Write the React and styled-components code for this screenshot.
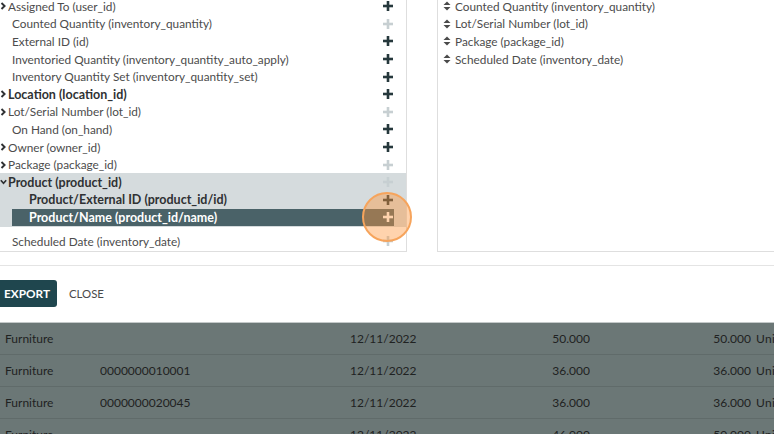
import styled, { createGlobalStyle } from "styled-components";

const GlobalStyle = createGlobalStyle`
  html, body {
    margin: 0;
    padding: 0;
    background: #ffffff;
  }
  body {
    font-family: "Lato", "Open Sans", sans-serif;
    font-size: 11.8px;
    color: #4a4a4a;
  }
`;

const Page = styled.div`
  position: relative;
  width: 774px;
  height: 434px;
  overflow: hidden;
`;

const Panels = styled.div`
  display: flex;
  gap: 30px;
  margin-top: -2.5px;
`;

const FieldPanel = styled.div`
  width: 406px;
  border-right: 1px solid #dedede;
  border-bottom: 1px solid #dedede;
  padding-bottom: 1px;
`;

const ExportPanel = styled.div`
  flex: 1;
  border-left: 1px solid #dedede;
  border-bottom: 1px solid #dedede;
  padding-left: 5px;
`;

const Row = styled.div`
  height: 17.6px;
  display: flex;
  align-items: center;
  margin-left: ${({ $indent }) => ($indent ? "12px" : "0")};
  margin-right: 12px;
  padding-left: ${({ $pad }) => $pad || 0}px;
  padding-right: 1px;
  font-size: ${({ $bold }) => ($bold ? "12.5px" : "11.8px")};
  font-weight: ${({ $bold }) => ($bold ? 700 : 400)};
  color: ${({ $active, $bold }) =>
    $active ? "#ffffff" : $bold ? "#2f3133" : "#4c4c4c"};
  background: ${({ $active }) => ($active ? "#4a6268" : "transparent")};
  white-space: nowrap;
`;

const Label = styled.span`
  flex: 1;
  overflow: hidden;
`;

const ChevronBox = styled.span`
  width: 8px;
  display: inline-flex;
  align-items: center;
  flex-shrink: 0;
`;

const ProductGroup = styled.div`
  background: #d5dbdd;
  padding-bottom: 1px;
  margin-bottom: 5px;
`;

const SortRow = styled.div`
  height: 17.6px;
  display: flex;
  align-items: center;
  gap: 4px;
  color: #4c4c4c;
  white-space: nowrap;
`;

const Divider = styled.div`
  margin-top: 13px;
  border-top: 1px solid #e4e4e4;
`;

const Footer = styled.div`
  display: flex;
  align-items: center;
  gap: 12px;
  padding: 14px 0 15px;
`;

const Button = styled.button`
  height: 27px;
  padding: ${({ $primary }) => ($primary ? "0 7px 0 4px" : "0")};
  border: none;
  border-radius: ${({ $primary }) => ($primary ? "0 3px 3px 0" : "3px")};
  background: ${({ $primary }) => ($primary ? "#1f464e" : "transparent")};
  color: ${({ $primary }) => ($primary ? "#ffffff" : "#4a4a4a")};
  font-family: inherit;
  font-size: ${({ $primary }) => ($primary ? "11.8px" : "11.4px")};
  font-weight: ${({ $primary }) => ($primary ? 700 : 400)};
  text-transform: uppercase;
  cursor: pointer;
`;

const Table = styled.div`
  background: #6b7776;
  border-top: 1px solid #c4c9c9;
  font-size: 12px;
`;

const TableRow = styled.div`
  height: 31px;
  display: grid;
  grid-template-columns: 100px 250px 160px 80px 161px 30px;
  align-items: center;
  border-bottom: 1px solid #606b6a;
  color: #1f2222;
  white-space: nowrap;
`;

const Cell = styled.div`
  text-align: ${({ $right }) => ($right ? "right" : "left")};
  padding-left: ${({ $first }) => ($first ? "5px" : "0")};
  overflow: hidden;
`;

const UomCell = styled.div`
  padding-left: 5px;
  letter-spacing: 0.3px;
`;

const Spot = styled.div`
  position: absolute;
  left: 362px;
  top: 192px;
  width: 46px;
  height: 46px;
  border-radius: 50%;
  border: 2px solid #f6a45c;
  background: rgba(255, 150, 60, 0.42);
  pointer-events: none;
`;

function PlusIcon({ tone }) {
  const color =
    tone === "light" ? "#c7cfd2" : tone === "white" ? "#ffffff" : "#26383c";
  return (
    <svg width="10" height="10" viewBox="0 0 10 10">
      <rect x="3.7" y="0" width="2.6" height="10" fill={color} />
      <rect x="0" y="3.7" width="10" height="2.6" fill={color} />
    </svg>
  );
}

function Chevron({ open }) {
  return (
    <ChevronBox>
      <svg width="7" height="8" viewBox="0 0 7 8">
        {open ? (
          <polyline
            points="0.8,2.2 3.5,5.2 6.2,2.2"
            fill="none"
            stroke="#2f3133"
            strokeWidth="1.7"
          />
        ) : (
          <polyline
            points="1.5,1 4.6,4 1.5,7"
            fill="none"
            stroke="#2f3133"
            strokeWidth="1.9"
          />
        )}
      </svg>
    </ChevronBox>
  );
}

function SortIcon() {
  return (
    <svg width="8" height="10" viewBox="0 0 8 10">
      <polygon points="4,0.5 7.5,4 0.5,4" fill="#4a4a4a" />
      <polygon points="0.5,6 7.5,6 4,9.5" fill="#4a4a4a" />
    </svg>
  );
}

const fields = [
  { label: "Assigned To (user_id)", chevron: true, plus: "dark" },
  { label: "Counted Quantity (inventory_quantity)", plus: "light" },
  { label: "External ID (id)", plus: "dark" },
  { label: "Inventoried Quantity (inventory_quantity_auto_apply)", plus: "dark" },
  { label: "Inventory Quantity Set (inventory_quantity_set)", plus: "dark" },
  { label: "Location (location_id)", chevron: true, bold: true, plus: "dark" },
  { label: "Lot/Serial Number (lot_id)", chevron: true, plus: "light" },
  { label: "On Hand (on_hand)", plus: "dark" },
  { label: "Owner (owner_id)", chevron: true, plus: "dark" },
  { label: "Package (package_id)", chevron: true, plus: "light" },
];

const exported = [
  "Counted Quantity (inventory_quantity)",
  "Lot/Serial Number (lot_id)",
  "Package (package_id)",
  "Scheduled Date (inventory_date)",
];

const quants = [
  { category: "Furniture", lot: "", date: "12/11/2022", counted: "50.000", onHand: "50.000" },
  { category: "Furniture", lot: "0000000010001", date: "12/11/2022", counted: "36.000", onHand: "36.000" },
  { category: "Furniture", lot: "0000000020045", date: "12/11/2022", counted: "36.000", onHand: "36.000" },
  { category: "Furniture", lot: "", date: "12/11/2022", counted: "46.000", onHand: "50.000" },
];

function FieldRow({ field }) {
  return (
    <Row $bold={field.bold} $pad={field.chevron ? 0 : 12}>
      {field.chevron && <Chevron />}
      <Label>{field.label}</Label>
      <PlusIcon tone={field.plus} />
    </Row>
  );
}

export default function App() {
  return (
    <>
      <GlobalStyle />
      <Page>
        <Panels>
          <FieldPanel>
            {fields.map((field) => (
              <FieldRow key={field.label} field={field} />
            ))}
            <ProductGroup>
              <Row $bold>
                <Chevron open />
                <Label>Product (product_id)</Label>
                <PlusIcon tone="light" />
              </Row>
              <Row $bold $indent $pad={17}>
                <Label>Product/External ID (product_id/id)</Label>
                <PlusIcon tone="dark" />
              </Row>
              <Row $bold $indent $active $pad={17}>
                <Label>Product/Name (product_id/name)</Label>
                <PlusIcon tone="white" />
              </Row>
            </ProductGroup>
            <Row $pad={12}>
              <Label>Scheduled Date (inventory_date)</Label>
              <PlusIcon tone="light" />
            </Row>
          </FieldPanel>
          <ExportPanel>
            {exported.map((label) => (
              <SortRow key={label}>
                <SortIcon />
                {label}
              </SortRow>
            ))}
          </ExportPanel>
        </Panels>
        <Divider />
        <Footer>
          <Button $primary>Export</Button>
          <Button>Close</Button>
        </Footer>
        <Table>
          {quants.map((q, i) => (
            <TableRow key={i}>
              <Cell $first>{q.category}</Cell>
              <Cell>{q.lot}</Cell>
              <Cell>{q.date}</Cell>
              <Cell $right>{q.counted}</Cell>
              <Cell $right>{q.onHand}</Cell>
              <UomCell>Units</UomCell>
            </TableRow>
          ))}
        </Table>
        <Spot />
      </Page>
    </>
  );
}
